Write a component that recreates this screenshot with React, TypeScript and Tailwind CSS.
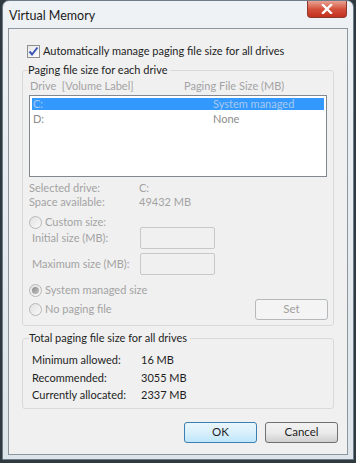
import React from 'react';

const font = { fontFamily: 'Lato, "Open Sans", sans-serif' };

function CheckBox() {
  return (
    <span className="w-[13px] h-[13px] border border-[#8e8f8f] bg-gradient-to-br from-[#e6e6e6] to-[#ffffff] flex items-center justify-center shrink-0">
      <svg width="11" height="11" viewBox="0 0 11 11">
        <path d="M1.5 5.5 L4 8.5 L9.5 1.5" fill="none" stroke="#3a55b5" strokeWidth="2" />
      </svg>
    </span>
  );
}

function Radio({ checked }: { checked?: boolean }) {
  return (
    <span className="w-[13px] h-[13px] rounded-full border border-[#b7b7b7] bg-gradient-to-br from-[#e2e2e2] to-[#f8f8f8] flex items-center justify-center shrink-0">
      {checked && <span className="w-[7px] h-[7px] rounded-full bg-gradient-to-br from-[#8a8a8a] to-[#c4c4c4]" />}
    </span>
  );
}

function Button({ label, isDefault, disabled, w }: { label: string; isDefault?: boolean; disabled?: boolean; w: string }) {
  const border = isDefault ? 'border-[#3c7fb1]' : disabled ? 'border-[#b5b9bc]' : 'border-[#707070]';
  const bg = disabled
    ? 'bg-[#f4f4f4]'
    : isDefault
      ? 'bg-gradient-to-b from-[#eaf6fd] via-[#d9f0fc] to-[#bee6fd]'
      : 'bg-gradient-to-b from-[#f2f2f2] via-[#ebebeb] to-[#cfcfcf]';
  return (
    <div className={`${w} h-[21px] shrink-0 rounded-[3px] border ${border} ${bg} flex items-center justify-center text-[11.5px] ${disabled ? 'text-[#a0a0a0]' : 'text-[#1e1e1e]'}`}>
      {label}
    </div>
  );
}

export default function App() {
  return (
    <div className="w-[356px] h-[463px] bg-[#2e3a40] overflow-hidden whitespace-nowrap" style={font}>
      <div className="ml-[2px] w-[352px] h-[460px] rounded-t-[7px] border border-[#6d7c86] bg-gradient-to-b from-[#eef2f5] to-[#dde5ea] flex flex-col">
        {/* Title bar */}
        <div className="h-[27px] flex items-start justify-between pl-[6px] pr-[6px]">
          <span className="mt-[6px] text-[12.5px] text-[#1a1a1a]">Virtual Memory</span>
          <div className="w-[40px] h-[17px] rounded-b-[4px] border border-[#8d3a2e] border-t-0 bg-gradient-to-b from-[#e8a294] via-[#d4513c] to-[#c2301c] flex items-center justify-center">
            <svg width="12" height="10" viewBox="0 0 12 10">
              <path d="M2 1 L10 9 M10 1 L2 9" stroke="#ffffff" strokeWidth="2.4" strokeLinecap="square" />
            </svg>
          </div>
        </div>

        {/* Client area */}
        <div className="mx-[5px] h-[427px] border border-[#8c969e] bg-[#f0f0f0] px-[13px] text-[11px] leading-[14px] text-[#1e1e1e]">
          <div className="mt-[15px] ml-[5px] h-[14px] flex items-center gap-[3px]">
            <CheckBox />
            <span>Automatically manage paging file size for all drives</span>
          </div>

          <fieldset className="mt-[5px] border border-[#d9d9d9] rounded-[3px] px-[6px] pb-[9px]">
            <legend className="ml-[-1px] pr-[3px] leading-[14px]">Paging file size for each drive</legend>
            <div className="mt-[2px] flex text-[#a3a3a3]">
              <span className="w-[155px] shrink-0 pl-[1px]">Drive&nbsp; [Volume Label]</span>
              <span>Paging File Size (MB)</span>
            </div>
            <div className="mt-[2px] h-[82px] border border-[#828790] bg-white p-[2px]">
              <div className="h-[12px] bg-[#3399ff] flex items-center text-[#a8c8ee] leading-[12px]">
                <span className="w-[181px] shrink-0 pl-[1px]">C:</span>
                <span>System managed</span>
              </div>
              <div className="mt-[3px] h-[12px] flex items-center text-[#8c8c8c] leading-[12px]">
                <span className="w-[181px] shrink-0 pl-[1px]">D:</span>
                <span>None</span>
              </div>
            </div>
            <div className="mt-[4px] text-[#a3a3a3]">
              <div className="flex"><span className="w-[110px] shrink-0">Selected drive:</span><span>C:</span></div>
              <div className="flex"><span className="w-[110px] shrink-0">Space available:</span><span>49432 MB</span></div>
            </div>
            <div className="mt-[6px] h-[14px] flex items-center gap-[3px] text-[#a3a3a3]">
              <Radio />
              <span>Custom size:</span>
            </div>
            <div className="mt-[-2px] flex items-center text-[#a3a3a3]">
              <span className="w-[111px] shrink-0 pl-[3px]">Initial size (MB):</span>
              <div className="w-[75px] h-[22px] border border-[#c8c8c8] rounded-[2px] bg-[#f0f0f0]" />
            </div>
            <div className="mt-[4px] flex items-center text-[#a3a3a3]">
              <span className="w-[111px] shrink-0 pl-[3px]">Maximum size (MB):</span>
              <div className="w-[75px] h-[22px] border border-[#c8c8c8] rounded-[2px] bg-[#f0f0f0]" />
            </div>
            <div className="mt-[8px] h-[14px] flex items-center gap-[3px] text-[#a3a3a3]">
              <Radio checked />
              <span>System managed size</span>
            </div>
            <div className="mt-[5px] h-[14px] flex items-center justify-between text-[#a3a3a3]">
              <div className="flex items-center gap-[3px]">
                <Radio />
                <span>No paging file</span>
              </div>
              <div className="mr-[-1px]">
                <Button label="Set" disabled w="w-[73px]" />
              </div>
            </div>
          </fieldset>

          <fieldset className="mt-[5px] border border-[#d9d9d9] rounded-[3px] px-[9px] pb-[4px]">
            <legend className="ml-[-3px] pr-[3px] leading-[14px]">Total paging file size for all drives</legend>
            <div className="mt-[6px] leading-[17.5px]">
              <div className="flex"><span className="w-[109px] shrink-0">Minimum allowed:</span><span>16 MB</span></div>
              <div className="flex"><span className="w-[109px] shrink-0">Recommended:</span><span>3055 MB</span></div>
              <div className="flex"><span className="w-[109px] shrink-0">Currently allocated:</span><span>2337 MB</span></div>
            </div>
          </fieldset>

          <div className="mt-[13px] flex justify-end gap-[8px] mr-[-4px]">
            <Button label="OK" isDefault w="w-[73px]" />
            <Button label="Cancel" w="w-[73px]" />
          </div>
        </div>
      </div>
    </div>
  );
}
